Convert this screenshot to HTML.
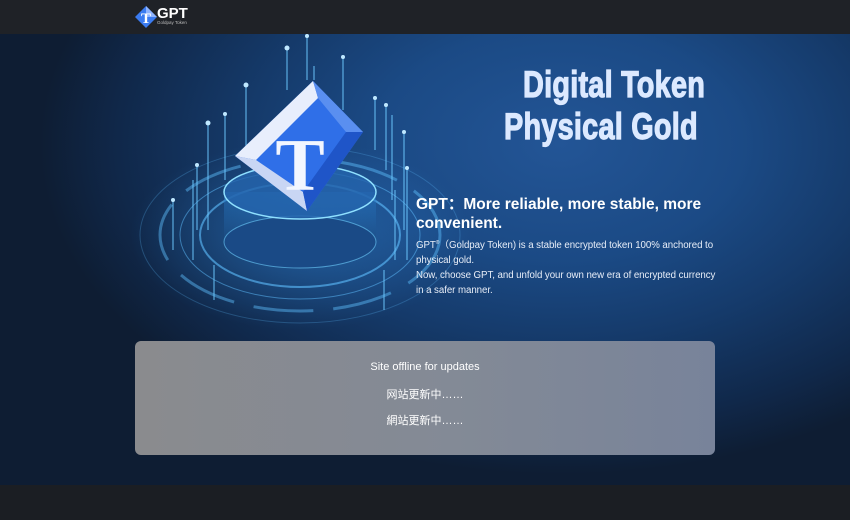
<!DOCTYPE html>
<html><head><meta charset="utf-8">
<style>
*{margin:0;padding:0;box-sizing:border-box}
body{width:850px;height:520px;overflow:hidden;background:#1b1e23;font-family:"Liberation Sans","Noto Sans CJK SC",sans-serif;position:relative}
.hdr{position:absolute;left:0;top:0;width:850px;height:34px;background:#1f2227}
.hero{position:absolute;left:0;top:34px;width:850px;height:451px;
background:radial-gradient(ellipse 520px 330px at 560px 110px,#235596 0%,#1b4a85 35%,#153a6a 60%,#10284a 85%,#0e1d33 100%);}
.big{position:absolute;color:#dce9ff;font-weight:bold;font-size:37px;white-space:nowrap;transform:scaleX(.78);transform-origin:left top;letter-spacing:0.3px;-webkit-text-stroke:1.2px #dce9ff}
.h2{position:absolute;left:416px;top:195px;width:320px;color:#fff;font-weight:bold;font-size:15.5px;line-height:19px}
.p{position:absolute;left:416px;top:236px;width:302px;color:#e8eef8;font-size:9.7px;line-height:15px;letter-spacing:-0.05px}
.box{position:absolute;left:135px;top:341px;width:580px;height:114px;border-radius:6px;background:linear-gradient(90deg,#8a8b8e,#838a96 55%,#78839a);color:#fff;text-align:center;font-size:11px}
.box div{position:absolute;left:0;width:100%}
</style></head><body>
<div class="hdr">
<svg style="position:absolute;left:134px;top:5px" width="24" height="24" viewBox="0 0 24 24">
<polygon points="12,1 23,12 12,23 1,12" fill="#3a7bf0"/>
<polygon points="12,1 23,12 12,12" fill="#8fb4ff"/>
<text x="12" y="18" font-size="15" font-family="Liberation Serif" font-weight="bold" fill="#fff" text-anchor="middle">T</text>
</svg>
<div style="position:absolute;left:157px;top:5px;color:#fff;font-weight:bold;font-size:15px">GPT</div>
<div style="position:absolute;left:157px;top:20px;color:#bbb;font-size:4.5px">Goldpay Token</div>
</div>
<div class="hero">
<svg style="position:absolute;left:0;top:0" width="850" height="451" viewBox="0 34 850 451">
<defs>
<radialGradient id="g1" cx="0.5" cy="0.5" r="0.5"><stop offset="0" stop-color="#3aa0ff" stop-opacity=".35"/><stop offset="1" stop-color="#3aa0ff" stop-opacity="0"/></radialGradient>
<linearGradient id="cy" x1="0" y1="0" x2="0" y2="1"><stop offset="0" stop-color="#2a80d0" stop-opacity=".45"/><stop offset="1" stop-color="#1a4a80" stop-opacity=".5"/></linearGradient>
</defs>
<ellipse cx="300" cy="235" rx="170" ry="95" fill="url(#g1)"/>
<g fill="none" stroke="#5fc0ff">
<ellipse cx="300" cy="235" rx="160" ry="88" stroke-opacity=".25" stroke-width="1"/>
<ellipse cx="300" cy="235" rx="140" ry="76" stroke-opacity=".45" stroke-width="3" stroke-dasharray="60 20"/>
<ellipse cx="300" cy="235" rx="120" ry="64" stroke-opacity=".5" stroke-width="1"/>
<ellipse cx="300" cy="235" rx="100" ry="52" stroke-opacity=".6" stroke-width="2"/>
</g>
<rect x="224" y="192" width="152" height="50" fill="url(#cy)"/>
<ellipse cx="300" cy="242" rx="76" ry="26" fill="#1a4a86" stroke="#6fd0ff" stroke-opacity=".6"/>
<ellipse cx="300" cy="192" rx="76" ry="27" fill="#2464ac" fill-opacity=".8" stroke="#8fe0ff" stroke-width="1.5"/>
<g stroke="#6cc8ff" stroke-width="1.2" opacity=".8">
<line x1="307" y1="34" x2="307" y2="80"/><line x1="287" y1="48" x2="287" y2="90"/><line x1="343" y1="55" x2="343" y2="110"/>
<line x1="314" y1="66" x2="314" y2="80"/><line x1="246" y1="85" x2="246" y2="150"/><line x1="225" y1="114" x2="225" y2="180"/>
<line x1="208" y1="123" x2="208" y2="230"/><line x1="375" y1="96" x2="375" y2="150"/><line x1="386" y1="105" x2="386" y2="170"/>
<line x1="404" y1="132" x2="404" y2="230"/><line x1="392" y1="115" x2="392" y2="200"/><line x1="197" y1="165" x2="197" y2="230"/>
<line x1="193" y1="180" x2="193" y2="260"/><line x1="407" y1="168" x2="407" y2="260"/><line x1="395" y1="190" x2="395" y2="260"/>
<line x1="173" y1="200" x2="173" y2="250"/><line x1="214" y1="265" x2="214" y2="300"/><line x1="384" y1="270" x2="384" y2="310"/>
</g>
<g fill="#bfe8ff">
<circle cx="307" cy="36" r="2"/><circle cx="287" cy="48" r="2.5"/><circle cx="343" cy="57" r="2"/><circle cx="246" cy="85" r="2.5"/>
<circle cx="225" cy="114" r="2"/><circle cx="208" cy="123" r="2.5"/><circle cx="375" cy="98" r="2"/><circle cx="386" cy="105" r="2"/>
<circle cx="404" cy="132" r="2"/><circle cx="197" cy="165" r="2"/><circle cx="407" cy="168" r="2"/><circle cx="173" cy="200" r="2"/>
</g>
<polygon points="313,81 363,132 307,211 235,156" fill="#2f6fe8"/>
<polygon points="313,81 235,156 256,160 318,98" fill="#e8eefc"/>
<polygon points="235,156 307,211 303,192 256,160" fill="#c9d6f4"/>
<polygon points="313,81 363,132 346,132 318,98" fill="#5a8ff0"/>
<polygon points="307,211 303,192 346,132 363,132" fill="#1f55c8"/>
<text x="300" y="190" font-family="Liberation Serif" font-weight="bold" font-size="74" fill="#f2f6ff" text-anchor="middle">T</text>
</svg>
<div class="big" style="left:523px;top:30px">Digital Token</div>
<div class="big" style="left:504px;top:72px">Physical Gold</div>
</div>
<div class="h2">GPT：More reliable, more stable, more convenient.</div>
<div class="p">GPT<sup style="font-size:5px">®</sup>（Goldpay Token) is a stable encrypted token 100% anchored to physical gold.<br>Now, choose GPT, and unfold your own new era of encrypted currency in a safer manner.</div>
<div class="box">
<div style="top:20px">Site offline for updates</div>
<div style="top:45px">网站更新中……</div>
<div style="top:71px">網站更新中……</div>
</div>
</body></html>
